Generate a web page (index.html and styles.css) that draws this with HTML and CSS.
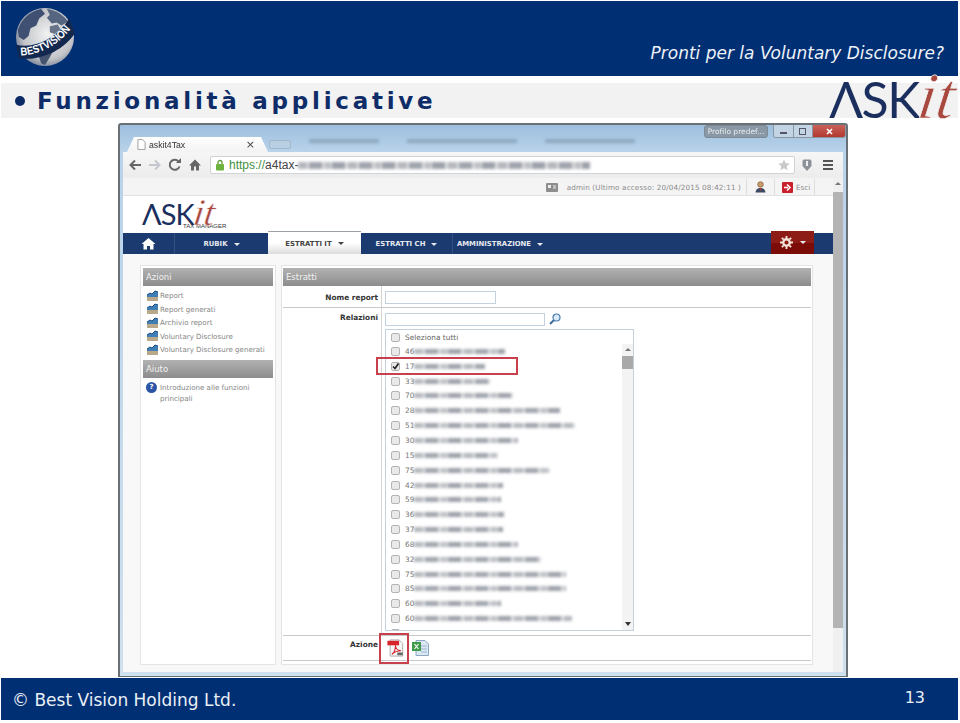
FILE: index.html
```html
<!DOCTYPE html>
<html lang="en">
<head>
    <meta charset="UTF-8">
    <meta name="viewport" content="width=device-width, initial-scale=1.0">
    <title>Funzionalità applicative</title>
    <link rel="stylesheet" href="styles.css">
</head>
<body>
    <svg class="defs" width="0" height="0">
        <symbol id="chart" viewBox="0 0 13 12">
            <path d="M1 7h11v4H1z" fill="#b9a98a"/>
            <path d="M1 5l3-2 2 1 3-3 3 1v5H1z" fill="#3f7fb5"/>
            <path d="M1 5l3-2 2 1 3-3 3 1" fill="none" stroke="#1d4f86" stroke-width="1"/>
        </symbol>
        <symbol id="box" viewBox="0 0 9 9">
            <rect x=".5" y=".5" width="8" height="8" rx="1.5" fill="#e9e9e9" stroke="#b4b4b4"/>
        </symbol>
    </svg>

    <div class="slide">
        <header class="top">
            <svg class="globe" viewBox="0 0 62 62">
                <defs>
                    <radialGradient id="sphere" cx="55%" cy="45%" r="62%">
                        <stop offset="0" stop-color="#f2f2f2"/>
                        <stop offset=".7" stop-color="#c2c4c8"/>
                        <stop offset="1" stop-color="#66728a"/>
                    </radialGradient>
                </defs>
                <circle cx="31" cy="31" r="30" fill="url(#sphere)"/>
                <path d="M3 24C6 13 15 4 27 2l4 5-6 5-3 7-6 3-2 8-5 4-5-3z" fill="#3f5072"/>
                <path d="M33 2c9 1 17 6 22 13l-7 4-5-3-5 1-5-6 3-3z" fill="#55657f"/>
                <path d="M22 48l10-4 7 2-3 6-5 8-4-2-2-6z" fill="#45536f"/>
                <path d="M36 20l8-2 3 5-6 5-5-2z" fill="#69758a"/>
                <path d="M1 39C20 44 44 32 56 12L62 27C50 45 26 56 4 53z" fill="#12284f"/>
                <path id="bandline" d="M6 50C20 50 44 42 58 22" fill="none"/>
                <text class="globe-text"><textPath href="#bandline" textLength="60" lengthAdjust="spacingAndGlyphs">BESTVISION</textPath></text>
            </svg>
            <p class="tagline">Pronti per la Voluntary Disclosure?</p>
        </header>

        <div class="title-strip">
            <span class="bullet"></span>
            <h1>Funzionalità applicative</h1>
            <div class="askit askit-large"><span class="askit-sans">ΛSK</span><span class="askit-it">it</span></div>
        </div>

        <div class="window">
            <div class="tabs">
                <div class="tab">
                    <svg class="favicon" viewBox="0 0 10 12"><path d="M1 .5h5l3 3v8H1z" fill="#fff" stroke="#999"/></svg>
                    <span class="tab-title">askit4Tax</span>
                    <span class="tab-close">×</span>
                </div>
                <div class="tab-new"></div>
                <div class="other-tabs">
                    <span class="smear smear-tab" style="width:70px"></span>
                    <span class="smear smear-tab" style="width:110px"></span>
                    <span class="smear smear-tab" style="width:90px"></span>
                </div>
                <div class="win-buttons">
                    <span class="profile">Profilo predef...</span>
                    <div class="win-ctrl">
                        <span class="ctrl"><svg viewBox="0 0 9 9"><path d="M1 6h7" stroke="#556" stroke-width="2"/></svg></span>
                        <span class="ctrl"><svg viewBox="0 0 9 9"><rect x="1.500" y="1.500" width="6" height="6" fill="none" stroke="#556"/></svg></span>
                        <span class="ctrl ctrl-close"><svg viewBox="0 0 9 9"><path d="M2 2l5 5M7 2L2 7" stroke="#fff" stroke-width="1.600"/></svg></span>
                    </div>
                </div>
            </div>

            <div class="toolbar">
                <svg class="nav-icon" viewBox="0 0 14 14"><path d="M13 7H3M7 2.500L2.500 7 7 11.500" fill="none" stroke="#666" stroke-width="2"/></svg>
                <svg class="nav-icon" viewBox="0 0 14 14"><path d="M1 7h10M7 2.500L11.500 7 7 11.500" fill="none" stroke="#c3c8ce" stroke-width="2"/></svg>
                <svg class="nav-icon" viewBox="0 0 14 14"><path d="M11.500 8.500A5 5 0 1 1 10.500 3.500" fill="none" stroke="#666" stroke-width="2"/><path d="M8 5h5V0z" fill="#666"/></svg>
                <svg class="nav-icon" viewBox="0 0 14 14"><path d="M7 1.500L1 7.500h2v5h3v-4h2v4h3v-5h2z" fill="#666"/></svg>
                <div class="address">
                    <svg class="lock" viewBox="0 0 10 12"><path d="M3 5V3.500a2 2 0 0 1 4 0V5" fill="none" stroke="#5d9e3a" stroke-width="1.300"/><rect x="1" y="5" width="8" height="6.500" rx="1" fill="#6db33f"/></svg>
                    <span class="url-scheme">https://</span><span class="url-host">a4tax-</span>
                    <span class="smear smear-url" style="width:292px"></span>
                    <svg class="star" viewBox="0 0 12 12"><path d="M6 .5l1.700 3.700 4 .4-3 2.700.9 4L6 9.300 2.400 11.300l.9-4-3-2.700 4-.4z" fill="#c9c9c9"/></svg>
                </div>
                <svg class="pocket" viewBox="0 0 12 14"><path d="M6 13L1.500 8V3a1.500 1.500 0 0 1 1.500-1.500h6A1.500 1.500 0 0 1 10.500 3v5z" fill="#8d9299"/><path d="M6 3v5" stroke="#eee" stroke-width="2"/></svg>
                <div class="burger"><i></i><i></i><i></i></div>
            </div>

            <div class="page">
                <div class="page-main">
                    <div class="userbar">
                        <svg class="id-icon" viewBox="0 0 12 9"><rect width="12" height="9" rx="1" fill="#8d8d8d"/><rect x="2" y="2" width="3" height="3" fill="#eee"/><path d="M7 3h3M7 5h3" stroke="#eee"/></svg>
                        <span class="user-info">admin (Ultimo accesso: 20/04/2015 08:42:11 )</span>
                        <span class="user-cell user-cell-icon">
                            <svg class="user-icon" viewBox="0 0 11 12"><circle cx="5.500" cy="3.500" r="2.800" fill="#c79a6b" stroke="#7a4a2a" stroke-width=".6"/><path d="M.5 11.500c.5-3.500 2.500-4.500 5-4.500s4.500 1 5 4.500z" fill="#3c4a63"/><path d="M4.500 7h2l-1 3z" fill="#c0392b"/></svg>
                        </span>
                        <span class="user-cell user-cell-exit">
                            <svg class="exit-icon" viewBox="0 0 11 11"><rect width="11" height="11" rx="1" fill="#c8202c"/><path d="M2 5.500h4M5 2.500l3 3-3 3" fill="none" stroke="#fff" stroke-width="1.500"/></svg>
                            <span>Esci</span>
                        </span>
                    </div>

                    <div class="brand">
                        <div class="askit askit-small"><span class="askit-sans">ΛSK</span><span class="askit-it">it</span></div>
                        <span class="brand-sub">TAX MANAGER</span>
                    </div>

                    <nav class="menu">
                        <span class="menu-home">
                            <svg viewBox="0 0 15 13"><path d="M7.500 1L.5 7h2v5.500h3.500V9h3v3.500h3.500V7h2z" fill="#fff"/></svg>
                        </span>
                        <a class="menu-item menu-rubik">RUBIK <b class="caret"></b></a>
                        <a class="menu-item menu-active">ESTRATTI IT <b class="caret"></b></a>
                        <a class="menu-item menu-ch">ESTRATTI CH <b class="caret"></b></a>
                        <a class="menu-item menu-admin">AMMINISTRAZIONE <b class="caret"></b></a>
                        <span class="menu-gear">
                            <svg viewBox="0 0 14 14"><circle cx="7" cy="7" r="3.500" fill="none" stroke="#f3e3d8" stroke-width="2.500"/><path d="M7 0v3M7 11v3M0 7h3M11 7h3M2 2l2 2M10 10l2 2M12 2l-2 2M4 10l-2 2" stroke="#f3e3d8" stroke-width="2"/></svg>
                            <b class="caret"></b>
                        </span>
                    </nav>

                    <div class="content">
                        <aside class="panel side">
                            <h2 class="panel-head">Azioni</h2>
                            <ul class="side-list">
                                <li><svg class="side-icon"><use href="#chart"/></svg>Report</li>
                                <li><svg class="side-icon"><use href="#chart"/></svg>Report generati</li>
                                <li><svg class="side-icon"><use href="#chart"/></svg>Archivio report</li>
                                <li><svg class="side-icon"><use href="#chart"/></svg>Voluntary Disclosure</li>
                                <li><svg class="side-icon"><use href="#chart"/></svg>Voluntary Disclosure generati</li>
                            </ul>
                            <h2 class="panel-head">Aiuto</h2>
                            <div class="help">
                                <span class="help-icon">?</span>
                                <span>Introduzione alle funzioni<br>principali</span>
                            </div>
                        </aside>

                        <section class="panel main">
                            <h2 class="panel-head">Estratti</h2>
                            <div class="field field-name">
                                <label>Nome report</label>
                                <div class="field-body"><input class="input input-name" type="text"></div>
                            </div>
                            <div class="field field-rel">
                                <label>Relazioni</label>
                                <div class="field-body">
                                    <div class="search-row">
                                        <input class="input input-rel" type="text">
                                        <svg class="search" viewBox="0 0 12 12"><circle cx="7.500" cy="4.500" r="3.500" fill="#dcebf7" stroke="#4b7fb0" stroke-width="1.200"/><path d="M5 7L1 11" stroke="#3c6c9c" stroke-width="2"/></svg>
                                    </div>
                                    <div class="list-wrap">
                                        <div class="listbox">
                                            <div class="row row-all"><svg class="check"><use href="#box"/></svg>Seleziona tutti</div>
                                            <div class="rows">
                                                <div class="row"><svg class="check"><use href="#box"/></svg>46<span class="smear" style="width:91px"></span></div>
                                                <div class="row">
                                                    <svg class="check" viewBox="0 0 9 9"><rect x=".5" y=".5" width="8" height="8" rx="1.500" fill="#e9e9e9" stroke="#b4b4b4"/><path d="M2 4.500l2 2 3.500-5" fill="none" stroke="#222" stroke-width="1.700"/></svg>17<span class="smear" style="width:71px"></span>
                                                </div>
                                                <div class="row"><svg class="check"><use href="#box"/></svg>33<span class="smear" style="width:76px"></span></div>
                                                <div class="row"><svg class="check"><use href="#box"/></svg>70<span class="smear" style="width:99px"></span></div>
                                                <div class="row"><svg class="check"><use href="#box"/></svg>28<span class="smear" style="width:146px"></span></div>
                                                <div class="row"><svg class="check"><use href="#box"/></svg>51<span class="smear" style="width:161px"></span></div>
                                                <div class="row"><svg class="check"><use href="#box"/></svg>30<span class="smear" style="width:104px"></span></div>
                                                <div class="row"><svg class="check"><use href="#box"/></svg>15<span class="smear" style="width:84px"></span></div>
                                                <div class="row"><svg class="check"><use href="#box"/></svg>75<span class="smear" style="width:135px"></span></div>
                                                <div class="row"><svg class="check"><use href="#box"/></svg>42<span class="smear" style="width:89px"></span></div>
                                                <div class="row"><svg class="check"><use href="#box"/></svg>59<span class="smear" style="width:87px"></span></div>
                                                <div class="row"><svg class="check"><use href="#box"/></svg>36<span class="smear" style="width:90px"></span></div>
                                                <div class="row"><svg class="check"><use href="#box"/></svg>37<span class="smear" style="width:89px"></span></div>
                                                <div class="row"><svg class="check"><use href="#box"/></svg>68<span class="smear" style="width:104px"></span></div>
                                                <div class="row"><svg class="check"><use href="#box"/></svg>32<span class="smear" style="width:127px"></span></div>
                                                <div class="row"><svg class="check"><use href="#box"/></svg>75<span class="smear" style="width:152px"></span></div>
                                                <div class="row"><svg class="check"><use href="#box"/></svg>85<span class="smear" style="width:152px"></span></div>
                                                <div class="row"><svg class="check"><use href="#box"/></svg>60<span class="smear" style="width:87px"></span></div>
                                                <div class="row"><svg class="check"><use href="#box"/></svg>60<span class="smear" style="width:158px"></span></div>
                                                <div class="row"><svg class="check"><use href="#box"/></svg></div>
                                            </div>
                                            <div class="list-scroll">
                                                <span class="arrow-up"></span>
                                                <span class="list-thumb"></span>
                                                <span class="arrow-down"></span>
                                            </div>
                                        </div>
                                        <span class="row-mark"></span>
                                    </div>
                                </div>
                            </div>
                            <div class="field field-action">
                                <label>Azione</label>
                                <div class="field-body action-icons">
                                    <span class="pdf-wrap">
                                        <svg class="pdf" viewBox="0 0 18 20">
                                            <path d="M3 1h10l4 4v14H3z" fill="#f5f5f5" stroke="#a9a9a9"/>
                                            <rect x="0" y="2" width="13" height="5" fill="#d8232a"/>
                                            <path d="M5 17c3-2 4-7 4-10 0 3 2 6 6 6-3 0-7 1-10 4z" fill="none" stroke="#d8232a" stroke-width="1.200"/>
                                            <rect x="11" y="15" width="6" height="3" fill="#666"/>
                                        </svg>
                                    </span>
                                    <svg class="xls" viewBox="0 0 17 16">
                                        <path d="M4 .5h9l3.500 3.500v11.500H4z" fill="#dbe7f3" stroke="#8aa6c2"/>
                                        <path d="M9 6h6M9 9h6M9 12h6" stroke="#9cb4cc"/>
                                        <rect x="0" y="2" width="9" height="9" fill="#3f9a4c"/>
                                        <path d="M2.500 4l4 5M6.500 4l-4 5" stroke="#fff" stroke-width="1.200"/>
                                    </svg>
                                </div>
                            </div>
                        </section>
                    </div>
                </div>
                <div class="page-scroll">
                    <span class="arrow-up"></span>
                    <span class="page-thumb"></span>
                </div>
            </div>
        </div>

        <footer class="bottom">
            <span class="copyright">© Best Vision Holding Ltd.</span>
            <span class="page-num">13</span>
        </footer>
    </div>
</body>
</html>
```

FILE: styles.css
```css
* {
    box-sizing: border-box;
}
body {
    background-color: #fff;
    font-family: "DejaVu Sans", Verdana, sans-serif;
    margin: 0;
    padding: 0;
}
h1, h2, p, ul {
    margin: 0;
    padding: 0;
}
.defs {
    position: absolute;
}
.slide {
    width: 960px;
    height: 723px;
    display: flex;
    flex-direction: column;
    overflow: hidden;
}

/* slide header */
.top {
    height: 75px;
    margin: 1px 2px 0 1px;
    background-color: #012f74;
    display: flex;
    justify-content: space-between;
    padding: 6px 14px 0 14px;
    flex: none;
}
.globe {
    width: 60px;
    height: 60px;
}
.globe-text {
    font-family: "Liberation Sans", Arial, sans-serif;
    font-weight: bold;
    font-size: 11.5px;
    fill: #fff;
}
.tagline {
    color: #eef2f8;
    font-style: italic;
    font-size: 17px;
    align-self: flex-end;
    padding-bottom: 13px;
    white-space: nowrap;
}

/* title strip */
.title-strip {
    height: 35px;
    margin: 7px 2px 0 1px;
    padding: 1px 0 0 14px;
    background-color: #f2f2f2;
    display: flex;
    align-items: center;
    position: relative;
    flex: none;
}
.bullet {
    width: 10px;
    height: 10px;
    border-radius: 50%;
    background-color: #0b2a66;
    margin-right: 12px;
}
h1 {
    font-size: 23px;
    font-weight: bold;
    color: #0e2c68;
    letter-spacing: 3.75px;
    white-space: nowrap;
}

/* askit logo */
.askit {
    line-height: 1;
    white-space: nowrap;
}
.askit-sans {
    font-family: "Lato", "Liberation Sans", sans-serif;
    color: #1b2f5e;
    letter-spacing: -.03em;
}
.askit-it {
    display: inline-block;
    font-family: "Liberation Serif", serif;
    font-style: italic;
    color: #a9483f;
    font-size: 1.3em;
    line-height: .7;
    transform: skewX(-8deg);
}
/* the stroke takes the page colour, to thin the serif letters */
.askit-large {
    position: absolute;
    right: 3px;
    top: -9px;
    font-size: 50px;
}
.askit-large .askit-it {
    -webkit-text-stroke: .7px #f2f2f2;
}
.askit-small {
    font-size: 29px;
    height: 25px;
    line-height: 25px;
}
.askit-small .askit-it {
    -webkit-text-stroke: .4px #fff;
}

/* browser window */
.window {
    width: 730px;
    height: 554px;
    margin: 5px 0 0 118px;
    border: 2px solid #6a7176;
    border-bottom-width: 1px;
    border-radius: 3px 3px 0 0;
    padding: 0 3px 4px;
    background: linear-gradient(180deg, #9dbfde 0, #b9d3ea 27px, #cfe0ee 100%);
    display: flex;
    flex-direction: column;
    filter: blur(.35px);
    flex: none;
}
.tabs {
    height: 27px;
    flex: none;
    display: flex;
    align-items: flex-end;
    padding-left: 4px;
    position: relative;
}
.tab {
    width: 141px;
    height: 15px;
    background: linear-gradient(180deg, #fff, #f3f3f3);
    clip-path: polygon(0 100%, 7px 0, calc(100% - 7px) 0, 100% 100%);
    display: flex;
    align-items: center;
    padding: 0 13px 0 10px;
    font-size: 8px;
    color: #333;
}
.favicon {
    width: 9px;
    height: 11px;
    margin-right: 3px;
}
.tab-title {
    font-family: "Liberation Sans", Arial, sans-serif;
    font-size: 8.7px;
    flex: 1;
}
.tab-close {
    font-size: 11px;
    color: #444;
}
.tab-new {
    width: 22px;
    height: 9px;
    margin: 0 0 3px 1px;
    border-radius: 2px;
    background-color: #b9cfe2;
    border: 1px solid #9fb8cf;
}
.other-tabs {
    display: flex;
    gap: 28px;
    align-self: flex-start;
    margin: 14px 0 0 18px;
}
.win-buttons {
    position: absolute;
    top: 0;
    right: -3px;
    display: flex;
    gap: 5px;
}
.profile {
    width: 64px;
    height: 13px;
    border: 1px solid #7d8a96;
    border-radius: 3px;
    background-color: #8a98a5;
    color: #e8edf1;
    font-size: 7.5px;
    line-height: 11px;
    text-align: center;
    white-space: nowrap;
    overflow: hidden;
}
.win-ctrl {
    width: 73px;
    height: 13px;
    display: flex;
    border: 1px solid #8a97a3;
    border-top: none;
    border-radius: 0 0 3px 3px;
    overflow: hidden;
}
.ctrl {
    flex: 1;
    display: flex;
    align-items: center;
    justify-content: center;
    background-color: #c3d5e5;
    border-right: 1px solid #8a97a3;
}
.ctrl svg {
    width: 9px;
    height: 9px;
}
.ctrl-close {
    flex: 1.700;
    background: linear-gradient(180deg, #c9615a, #b23a30);
    border-right: none;
}
.toolbar {
    height: 26px;
    flex: none;
    background: linear-gradient(180deg, #f6f6f6, #ececec);
    display: flex;
    align-items: center;
    padding-left: 5px;
}
.nav-icon {
    width: 14px;
    height: 14px;
    margin-right: 6px;
}
.address {
    width: 585px;
    height: 18px;
    margin-left: 2px;
    background-color: #fff;
    border: 1px solid #cfd3d6;
    border-radius: 2px;
    display: flex;
    align-items: center;
    padding: 0 4px 0 4px;
    font-family: "Liberation Sans", Arial, sans-serif;
    font-size: 12px;
}
.lock {
    width: 10px;
    height: 12px;
    margin-right: 4px;
}
.url-scheme {
    color: #3f8f3f;
}
.url-host {
    color: #444;
}
.star {
    width: 12px;
    height: 12px;
    margin-left: auto;
}
.pocket {
    width: 12px;
    height: 14px;
    margin-left: 6px;
}
.burger {
    width: 10px;
    margin-left: 10px;
    display: flex;
    flex-direction: column;
    gap: 2px;
}
.burger i {
    display: block;
    height: 2px;
    background-color: #555;
}

/* blurred-out data */
.smear {
    display: inline-block;
    height: 5px;
    background: repeating-linear-gradient(90deg, #b4b7bd 0, #b4b7bd 9px, #dfe0e2 9px, #dfe0e2 11px, #a0a4ac 11px, #a0a4ac 24px, #d8d9dc 24px, #d8d9dc 27px, #bcbfc4 27px, #bcbfc4 33px, #e4e4e4 33px, #e4e4e4 34px, #9da1a9 34px, #9da1a9 47px, #dcdde0 47px, #dcdde0 50px);
    filter: blur(1.7px);
}
.smear-tab {
    height: 4px;
    background: #8ea8c0;
}
.smear-url {
    height: 7px;
}

/* page inside the window */
.page {
    flex: 1;
    min-height: 0;
    display: flex;
    background-color: #fff;
}
.page-main {
    width: 710px;
    display: flex;
    flex-direction: column;
}
.page-scroll {
    width: 10px;
    background-color: #f0f0f0;
    display: flex;
    flex-direction: column;
    align-items: center;
}
.page-thumb {
    width: 100%;
    height: 436px;
    margin-top: 7px;
    background-color: #b4b4b4;
}
.arrow-up {
    width: 0;
    height: 0;
    margin-top: 4px;
    border: 3px solid transparent;
    border-top: none;
    border-bottom: 3px solid #777;
}
.arrow-down {
    width: 0;
    height: 0;
    margin: auto 0 4px;
    border: 3px solid transparent;
    border-bottom: none;
    border-top: 4px solid #333;
}
.userbar {
    height: 18px;
    flex: none;
    background-color: #f4f4f4;
    border-bottom: 1px solid #e2e2e2;
    display: flex;
    align-items: center;
    justify-content: flex-end;
    font-size: 7.2px;
    color: #8b8b8b;
    padding: 1px 18px 0 0;
}
.id-icon {
    width: 12px;
    height: 9px;
    margin-right: 9px;
}
.user-info {
    margin-right: 5px;
    white-space: nowrap;
    letter-spacing: .15px;
}
.user-cell {
    height: 100%;
    border-left: 1px solid #ddd;
    display: flex;
    align-items: center;
}
.user-cell-icon {
    width: 28px;
    justify-content: center;
}
.user-cell-exit {
    width: 41px;
    padding-left: 7px;
    gap: 3px;
    border-right: 1px solid #ddd;
}
.user-icon {
    width: 11px;
    height: 12px;
}
.exit-icon {
    width: 11px;
    height: 11px;
}
.brand {
    height: 37px;
    flex: none;
    padding: 3px 0 0 19px;
    display: flex;
    flex-direction: column;
}
.brand-sub {
    margin: -1px 0 0 41px;
    font-family: "Liberation Sans", Arial, sans-serif;
    font-size: 6px;
    line-height: 7px;
    color: #333;
}
.menu {
    height: 21px;
    flex: none;
    background-color: #1b3a6f;
    display: flex;
    align-items: stretch;
    font-size: 6.9px;
    font-weight: bold;
    color: #e6e9ef;
}
.menu-home {
    width: 52px;
    display: flex;
    align-items: center;
    justify-content: center;
    border-right: 1px solid #33507f;
}
.menu-home svg {
    width: 15px;
    height: 13px;
}
.menu-item {
    display: flex;
    align-items: center;
    justify-content: center;
    gap: 6px;
    white-space: nowrap;
    padding-top: 1px;
}
.menu-rubik {
    width: 93px;
}
.menu-active {
    width: 93px;
    height: 23px;
    margin-top: -2px;
    color: #444;
    background: linear-gradient(180deg, #fff 50%, #dcdcdc);
    border-top: 1px solid #9aa0a6;
}
.menu-ch {
    width: 92px;
    border-right: 1px solid #33507f;
}
.menu-admin {
    width: 94px;
}
.menu-gear {
    width: 43px;
    height: 23px;
    margin: -2px 19px 0 auto;
    background: linear-gradient(180deg, #8e1c16 50%, #7b0c08 50%);
    display: flex;
    align-items: center;
    justify-content: center;
    gap: 7px;
}
.menu-gear svg {
    width: 13px;
    height: 13px;
}
.caret {
    width: 0;
    height: 0;
    border: 3px solid transparent;
    border-bottom: none;
    border-top: 3px solid currentColor;
}

/* panels */
.content {
    flex: 1;
    min-height: 0;
    background-color: #f8f8f8;
    display: flex;
    gap: 5px;
    padding: 11px 19px 7px 17px;
}
.panel {
    background-color: #fff;
    border: 1px solid #e4e4e4;
    padding: 2px 1px 1px;
}
.side {
    width: 136px;
    padding: 2px 2px 1px;
}
.main {
    width: 532px;
    display: flex;
    flex-direction: column;
}
.panel-head {
    height: 18px;
    background: linear-gradient(180deg, #b2b2b2, #8c8c8c);
    color: #f1f1f1;
    font-size: 8.5px;
    font-weight: normal;
    line-height: 18px;
    padding-left: 3px;
}
.side-list {
    list-style: none;
    padding: 3px 0 3px 3px;
    font-size: 7.1px;
    color: #858585;
}
.side-list li {
    height: 13.5px;
    display: flex;
    align-items: center;
    white-space: nowrap;
}
.side-icon {
    width: 13px;
    height: 12px;
    margin-right: 1px;
}
.help {
    display: flex;
    gap: 3px;
    padding: 4px 0 0 3px;
    font-size: 7.1px;
    line-height: 11px;
    color: #858585;
}
.help-icon {
    width: 11px;
    height: 11px;
    flex: none;
    border-radius: 50%;
    background-color: #2c55a5;
    color: #fff;
    font-size: 7px;
    font-weight: bold;
    text-align: center;
    line-height: 11px;
}

/* form */
.field {
    display: flex;
    border-bottom: 1px solid #c9c9c9;
}
.field label {
    width: 98px;
    flex: none;
    text-align: right;
    padding-right: 3px;
    font-size: 7.4px;
    font-weight: bold;
    color: #333;
}
.field-body {
    flex: 1;
    border-left: 1px solid #d5d5d5;
    padding-left: 3px;
}
.field-name {
    height: 22px;
}
.field-name label {
    padding-top: 7px;
}
.field-name .field-body {
    padding-top: 5px;
}
.field-rel {
    height: 328px;
}
.field-rel label {
    padding-top: 5px;
}
.field-rel .field-body {
    padding-top: 5px;
}
.field-action {
    flex: 1;
    margin-bottom: 2px;
}
.field-action label {
    padding-top: 4px;
}
.field-action .field-body {
    border-left: none;
    padding-left: 4px;
}
.input {
    display: block;
    height: 13px;
    border: 1px solid #c3d0dd;
    background-color: #fff;
    padding: 0;
}
.input-name {
    width: 111px;
}
.input-rel {
    width: 160px;
}
.search-row {
    display: flex;
    gap: 4px;
}
.search {
    width: 12px;
    height: 12px;
}
.list-wrap {
    position: relative;
    width: 249px;
    margin-top: 3px;
}
.listbox {
    height: 302px;
    border: 1px solid #c3d0dd;
    overflow: hidden;
    display: grid;
    grid-template-columns: 1fr 11px;
    grid-template-rows: 14px 1fr;
    font-size: 7.4px;
    color: #777;
}
.rows {
    min-height: 0;
}
.row {
    height: 14.850px;
    display: flex;
    align-items: center;
    padding-left: 5px;
    white-space: nowrap;
}
.row-all {
    grid-column: 1 / 3;
    height: 14px;
    color: #666;
}
.check {
    width: 9px;
    height: 9px;
    margin-right: 5px;
    flex: none;
}
/* red highlights drawn over the list and the pdf icon */
.row-mark {
    position: absolute;
    left: -9px;
    top: 28px;
    width: 142px;
    height: 18px;
    border: 2px solid #c8404c;
}
.list-scroll {
    background-color: #f3f3f3;
    display: flex;
    flex-direction: column;
    align-items: center;
    min-height: 0;
}
.list-thumb {
    width: 100%;
    height: 13px;
    margin-top: 5px;
    background-color: #a9a9a9;
}
.action-icons {
    display: flex;
    gap: 8px;
    align-items: flex-start;
}
.pdf-wrap {
    position: relative;
    display: block;
    padding: 3px 0 0 2px;
}
.pdf-wrap::after {
    content: "";
    position: absolute;
    left: -6px;
    top: -3px;
    width: 30px;
    height: 31px;
    box-sizing: border-box;
    border: 2px solid #c8404c;
}
.pdf {
    display: block;
    width: 17px;
    height: 18px;
}
.xls {
    width: 17px;
    height: 16px;
    margin-top: 4px;
}

/* slide footer */
.bottom {
    height: 42px;
    margin: 1px 2px 0 1px;
    background-color: #012f74;
    color: #e9eff7;
    display: flex;
    justify-content: space-between;
    padding: 0 33px 0 11px;
    flex: none;
}
.copyright {
    font-size: 17px;
    padding-top: 12px;
}
.page-num {
    font-size: 16px;
    padding-top: 10px;
}
```
